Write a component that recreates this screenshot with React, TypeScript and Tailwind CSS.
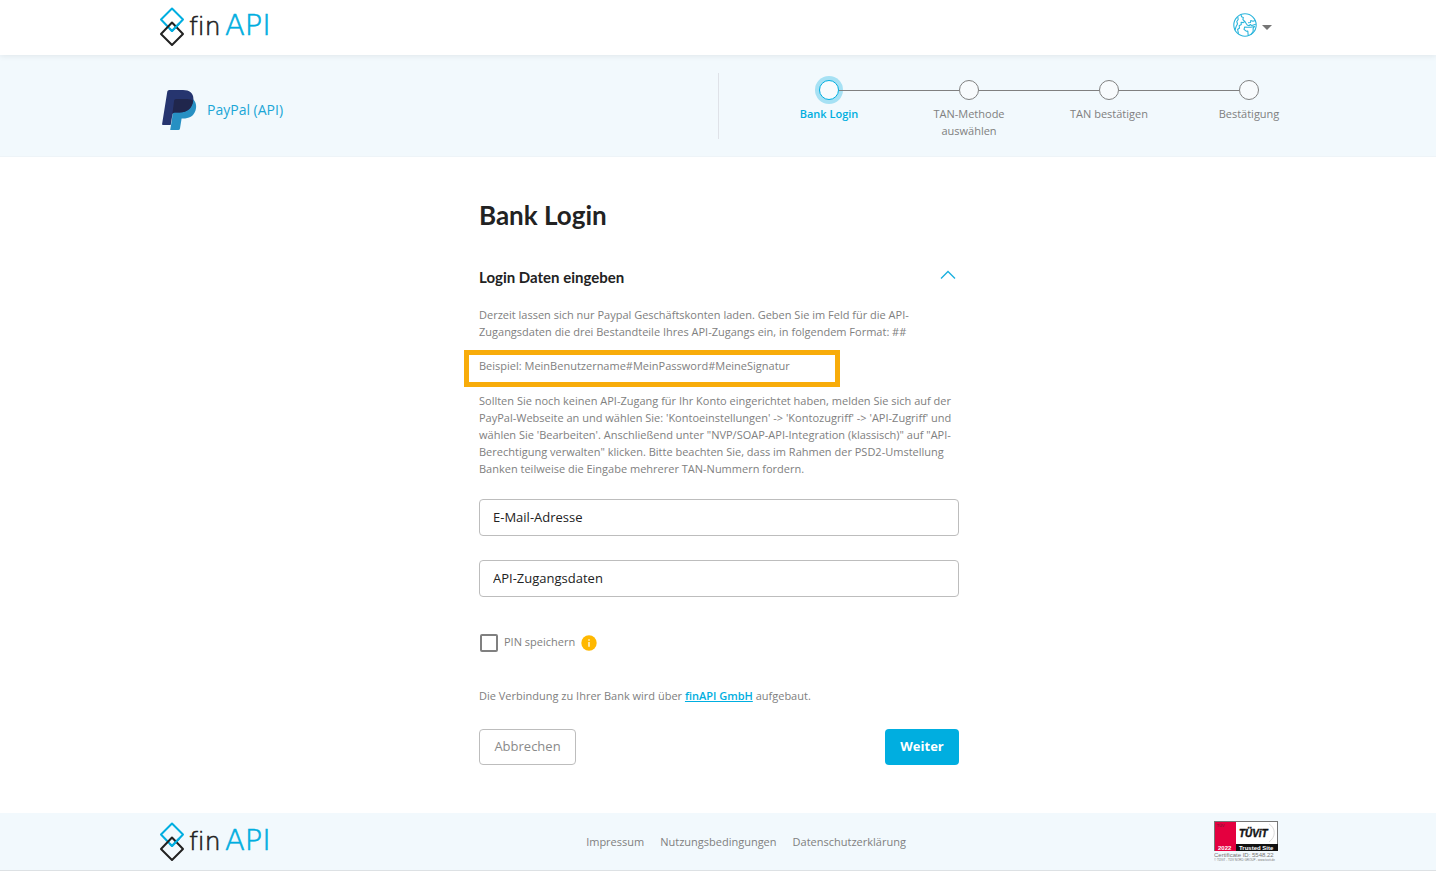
import React, { useState } from "react";

const steps = ["Bank Login", "TAN-Methode auswählen", "TAN bestätigen", "Bestätigung"];

const footerLinks = ["Impressum", "Nutzungsbedingungen", "Datenschutzerklärung"];

const FinApiLogo: React.FC = () => (
  <svg width="124" height="40" viewBox="0 0 124 40" role="img" aria-label="finAPI">
    <g fill="none" strokeWidth="2" strokeLinejoin="round" strokeLinecap="round">
      <path d="M14 1.500L25 12.500L14 24L3 12.500Z" stroke="#00aee0" />
      <path d="M14 15.500L25 27L14 38L3 27Z" stroke="#222" />
      <path d="M21 16.700L14 24L12 22" stroke="#00aee0" />
    </g>
    <text x="31" y="28" fontFamily="DejaVu Sans" fontWeight="200" fontSize="25" fill="#222" stroke="#222" strokeWidth="0.6" className="[font-variant-ligatures:none]">
      fin
    </text>
    <text x="67" y="28" fontFamily="DejaVu Sans" fontWeight="200" fontSize="29" fill="#00aee0" stroke="#00aee0" strokeWidth="0.6">
      API
    </text>
  </svg>
);

const PayPalLogo: React.FC = () => (
  <svg width="36" height="40" viewBox="0 0 36 40" aria-hidden="true">
    <path d="M12 9H31C34 12 35 16 33.5 20.500C31.500 26.500 27 28.500 21 28.500H19.600L18 38.500Q17.700 40 16.300 40H8.200L10 29Z" fill="#2790c3" />
    <path d="M5.300 1.500Q5.600 0 7.200 0H21C28 0 32 3.500 31.300 10C30.400 18.500 25 22.500 17.500 22.500H12.500Q10.800 22.500 10.500 24L8.700 35H.9Q-.1 35 .1 34Z" fill="#26356f" />
    <path d="M12.100 10.500Q12.400 9 14 9H25Q29 9 31.200 10.800C30 18.700 25 22.500 17.500 22.500H12.500Q10.800 22.500 10.400 24Z" fill="#20264c" />
  </svg>
);

const GlobeIcon: React.FC = () => (
  <svg width="24" height="24" viewBox="0 0 24 24" fill="none" stroke="#2bb5dc" strokeWidth="1.1" strokeLinejoin="round" aria-hidden="true">
    <circle cx="12" cy="12" r="11.200" />
    <path d="M8 1.700L8.600 3.800L10.300 4.500L9.900 6.700L11.800 8.500L10.200 9.600L8.100 9.300L8.300 11.500L6.200 12.800L6.500 15L4.600 16.500L5.500 20.600" />
    <path d="M4.800 4L5.200 6.500L3.800 8.500L4.500 11L3.200 13.300L2 17" />
    <path d="M22.400 7.400L20 8.300L17.800 7.500L17.500 9.500L15 9.700M11.800 8.500L14.200 12L16 12.800L17.300 11.500L18.800 12.600L22.800 11.200" />
    <path d="M14.300 14.300L11.700 14L11 16.300L13.200 18.200L14.800 18L15.200 22.500M18 21.500L20.200 18.200L20.100 15.500L21.500 13.500L17.800 14.200L14.300 14.300" />
  </svg>
);

const TuvBadge: React.FC = () => (
  <svg width="64" height="41" viewBox="0 0 64 41" role="img" aria-label="TÜViT Trusted Site 2022">
    <rect x=".5" y=".5" width="63" height="29" fill="#fff" stroke="#777" />
    <rect x="1" y="1" width="21" height="29" fill="#e4003f" />
    <rect x="22" y="23" width="42" height="7" fill="#111" />
    <g fontFamily="Liberation Sans" fontWeight="700">
      <text x="2.500" y="6" fontSize="4" fill="#8c1738">TÜV</text>
      <text x="4" y="29" fontSize="6" fill="#fff">2022</text>
      <text x="25" y="29" fontSize="6" fill="#fff">Trusted Site</text>
      <text x="25" y="16" fontSize="10" fontStyle="italic" fill="#111" stroke="#111" strokeWidth=".4">TÜViT</text>
    </g>
    <path d="M55 3C62 7 62 16 55 21" fill="none" stroke="#ccc" strokeWidth=".7" />
    <g fontFamily="Liberation Sans" fill="#777">
      <text x="0" y="36" fontSize="6">Certificate ID: 5548.22</text>
      <text x="0" y="40" fontSize="3">© TÜViT - TÜV NORD GROUP - www.tuvit.de</text>
    </g>
  </svg>
);

const App: React.FC = () => {
  const [isOpen, setIsOpen] = useState(true);
  const [email, setEmail] = useState("");
  const [credentials, setCredentials] = useState("");
  const [savePin, setSavePin] = useState(false);

  const inputClass =
    "block h-[37px] w-full rounded border border-[#bdbdbd] bg-white px-[13px] pb-0.5 text-[13px] text-[#222] placeholder:text-[#222] placeholder:opacity-100";

  return (
    <div className="bg-white font-['Open_Sans',sans-serif] text-[11px] leading-[17px] text-[#808080]">
      <header className="relative h-[55px] bg-white shadow-[0_1px_6px_rgba(0,0,0,0.08)]">
        <div className="mx-auto flex h-full max-w-[1120px] items-center justify-between pr-[5px] pb-0.5">
          <a href="#home">
            <FinApiLogo />
          </a>
          <button type="button" aria-label="Sprache" className="flex items-center gap-1 pb-1">
            <GlobeIcon />
            <svg width="12" height="12" viewBox="0 0 12 12" aria-hidden="true">
              <path d="M1 6H11L6 11Z" fill="#757575" />
            </svg>
          </button>
        </div>
      </header>

      {/* Bank and progress */}
      <section className="border-b border-[#eef4f8] bg-[#f2f9fd]">
        <div className="mx-auto grid h-[101px] max-w-[1120px] grid-cols-2 py-[18px]">
          <div className="flex items-center gap-[9px] pt-2 pl-1 text-[14px] text-[#1ba6d6]">
            <PayPalLogo />
            <span className="pb-0.5">PayPal (API)</span>
          </div>
          <div className="flex justify-end border-l border-[#dfe2e8]">
            <ol className="-mr-[41px] grid w-[560px] grid-cols-4 pt-[7px]">
              {steps.map((step, i) => (
                <li key={step} className="flex flex-col items-center">
                  <div className="flex w-full items-center">
                    <div className={`h-px flex-1 ${i > 0 ? "bg-[#808080]" : ""}`} />
                    <div
                      className={`h-5 w-5 rounded-full border ${
                        i === 0
                          ? "border-[#00aee0] bg-[#f8fbfd] ring-4 ring-[#a6e1f4]"
                          : "border-[#808080] bg-[#f8fbfd]"
                      }`}
                    />
                    <div className={`h-px flex-1 ${i < steps.length - 1 ? "bg-[#808080]" : ""}`} />
                  </div>
                  <span
                    className={`mt-[5px] max-w-[90px] text-center ${i === 0 ? "font-semibold text-[#00aee0]" : ""}`}
                  >
                    {step}
                  </span>
                </li>
              ))}
            </ol>
          </div>
        </div>
      </section>

      {/* Login form */}
      <main className="mx-auto max-w-[482px] pt-[42px] pb-12 pl-0.5">
        <h1 className="font-[Lato,sans-serif] text-[26px] leading-8 font-bold text-[#222]">Bank Login</h1>

        <form onSubmit={(e) => e.preventDefault()}>
          <div className="mt-[34px] flex items-center justify-between pr-[3px]">
            <h2 className="font-[Lato,sans-serif] text-[15px] leading-6 font-bold text-[#222]">Login Daten eingeben</h2>
            <button type="button" aria-label="Login Daten ein- oder ausklappen" onClick={() => setIsOpen(!isOpen)} className="pb-1">
              <svg
                width="16"
                height="10"
                viewBox="0 0 16 10"
                fill="none"
                stroke="#1cb0de"
                strokeWidth="1.4"
                className={isOpen ? "" : "rotate-180"}
              >
                <path d="M1 8.500L8 1.500L15 8.500" />
              </svg>
            </button>
          </div>

          {isOpen && (
            <>
              <p className="mt-[17px]">
                Derzeit lassen sich nur Paypal Geschäftskonten laden. Geben Sie im Feld für die API-
                <br />
                Zugangsdaten die drei Bestandteile Ihres API-Zugangs ein, in folgendem Format: ##
              </p>
              <p className="mt-2.5 -ml-[15px] w-[376px] border-5 border-[#f8ac0a] px-2.5 pt-0.5 pb-2">
                Beispiel: MeinBenutzername#MeinPassword#MeineSignatur
              </p>
              <p className="mt-[5px] whitespace-nowrap">
                Sollten Sie noch keinen API-Zugang für Ihr Konto eingerichtet haben, melden Sie sich auf der
                <br />
                PayPal-Webseite an und wählen Sie: 'Kontoeinstellungen' -&gt; 'Kontozugriff' -&gt; 'API-Zugriff' und
                <br />
                wählen Sie 'Bearbeiten'. Anschließend unter "NVP/SOAP-API-Integration (klassisch)" auf "API-
                <br />
                Berechtigung verwalten" klicken. Bitte beachten Sie, dass im Rahmen der PSD2-Umstellung
                <br />
                Banken teilweise die Eingabe mehrerer TAN-Nummern fordern.
              </p>

              <div className="mt-[22px] flex flex-col gap-6">
                <input
                  type="email"
                  aria-label="E-Mail-Adresse"
                  placeholder="E-Mail-Adresse"
                  value={email}
                  onChange={(e) => setEmail(e.target.value)}
                  className={inputClass}
                />
                <input
                  type="text"
                  aria-label="API-Zugangsdaten"
                  placeholder="API-Zugangsdaten"
                  value={credentials}
                  onChange={(e) => setCredentials(e.target.value)}
                  className={inputClass}
                />
              </div>

              <div className="mt-9 flex items-center gap-1.5 pl-px">
                <input
                  id="save-pin"
                  type="checkbox"
                  checked={savePin}
                  onChange={(e) => setSavePin(e.target.checked)}
                  className="h-[18px] w-[18px] appearance-none rounded-xs border-2 border-[#808080] bg-white checked:bg-[#00aee0]"
                />
                <label htmlFor="save-pin" className="pb-0.5">
                  PIN speichern
                </label>
                <svg width="16" height="16" viewBox="0 0 16 16" role="img" aria-label="Info">
                  <circle cx="8" cy="8" r="7.700" fill="#ffb800" />
                  <path d="M7.200 4.200H8.800V5.700H7.200ZM7.200 6.900H8.800V11.800H7.200Z" fill="#fff3d0" />
                </svg>
              </div>
            </>
          )}

          <p className="mt-[35px]">
            Die Verbindung zu Ihrer Bank wird über{" "}
            <a href="#finapi" className="font-semibold text-[#00aee0] underline">
              finAPI GmbH
            </a>{" "}
            aufgebaut.
          </p>

          <div className="mt-[25px] flex justify-between text-[13px]">
            <button type="button" className="h-9 w-[97px] rounded border border-[#bdbdbd] bg-white pb-0.5 text-[#8a8a8a]">
              Abbrechen
            </button>
            <button type="submit" className="h-9 w-[74px] rounded bg-[#00aee0] pb-0.5 font-bold text-white">
              Weiter
            </button>
          </div>
        </form>
      </main>

      <footer className="border-b border-[#dde1e4] bg-[#f2f9fd]">
        <div className="mx-auto grid h-[57px] max-w-[1120px] grid-cols-[1fr_auto_1fr] items-center">
          <a href="#home" className="justify-self-start">
            <FinApiLogo />
          </a>
          <nav className="flex gap-4 pl-14">
            {footerLinks.map((link) => (
              <a key={link} href={`#${link.toLowerCase()}`}>
                {link}
              </a>
            ))}
          </nav>
          <div className="justify-self-end">
            <TuvBadge />
          </div>
        </div>
      </footer>
    </div>
  );
};

export default App;
